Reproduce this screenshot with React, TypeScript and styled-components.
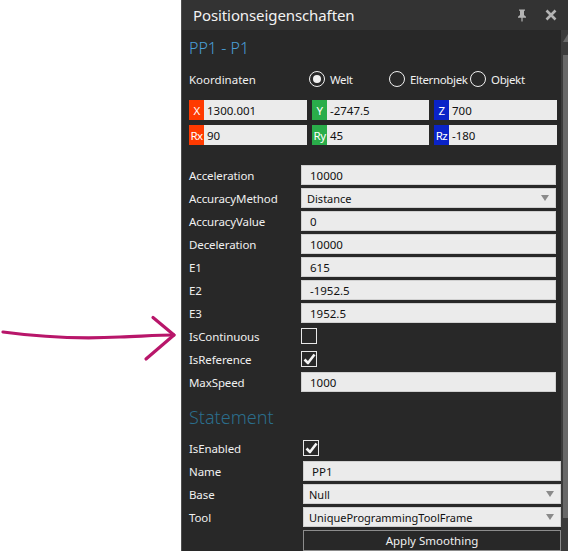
import React from "react";
import styled, { createGlobalStyle } from "styled-components";

const Global = createGlobalStyle`
  html, body { margin: 0; padding: 0; background: #ffffff; }
  body { font-family: "Noto Sans", "Open Sans", sans-serif; }
  * { box-sizing: border-box; }
`;

const Page = styled.div`
  display: flex;
  width: 568px;
  height: 551px;
  overflow: hidden;
`;

const Margin = styled.div`
  width: 181px;
  flex: none;
  display: flex;
  flex-direction: column;
  padding-top: 312px;
`;

const Panel = styled.div`
  width: 387px;
  height: 551px;
  flex: none;
  display: flex;
  flex-direction: column;
  background: #282828;
  border-left: 1px solid #4e4e4e;
`;

const TitleBar = styled.div`
  height: 30px;
  flex: none;
  display: flex;
  align-items: center;
  background: #333333;
  padding: 0 10px 0 11px;
  color: #f2f2f2;
  font-size: 15px;
`;

const Title = styled.div`
  flex: 1;
  letter-spacing: -0.1px;
`;

const TitleIcon = styled.div<{ $gap?: number }>`
  width: 14px;
  display: flex;
  align-items: center;
  justify-content: center;
  margin-left: ${(p) => p.$gap ?? 0}px;
`;

const Body = styled.div`
  flex: 1;
  display: flex;
  min-height: 0;
`;

const Content = styled.div`
  flex: 1;
  display: flex;
  flex-direction: column;
  padding: 6px 0 0 7px;
  overflow: hidden;
`;

const ScrollBar = styled.div`
  width: 7px;
  flex: none;
  display: flex;
  flex-direction: column;
  background: #3b3b3b;
  padding-left: 2px;
`;

const ScrollArrow = styled.div`
  height: 25px;
  display: flex;
  align-items: flex-start;
  padding-top: 4px;
`;

const ScrollThumb = styled.div`
  height: 463px;
  background: #686868;
`;

const Heading = styled.div<{ $color: string; $size: number; $top?: number }>`
  color: ${(p) => p.$color};
  font-size: ${(p) => p.$size}px;
  font-weight: 300;
  line-height: 24px;
  height: 24px;
  margin-top: ${(p) => p.$top ?? 0}px;
`;

const CoordHeader = styled.div`
  display: flex;
  align-items: center;
  height: 20px;
  margin-top: 9px;
  color: #f0f0f0;
  font-size: 11.5px;
`;

const CoordLabel = styled.div`
  width: 120px;
`;

const Radio = styled.div<{ $w: number }>`
  display: flex;
  align-items: center;
  width: ${(p) => p.$w}px;
  gap: 5px;
  letter-spacing: -0.35px;
`;

const RadioCircle = styled.div<{ $on?: boolean }>`
  width: 16px;
  height: 16px;
  flex: none;
  border-radius: 50%;
  border: 1.5px solid #f0f0f0;
  display: flex;
  align-items: center;
  justify-content: center;
  &::after {
    content: "";
    width: 8px;
    height: 8px;
    border-radius: 50%;
    background: ${(p) => (p.$on ? "#f0f0f0" : "transparent")};
  }
`;

const CoordGrid = styled.div`
  display: grid;
  grid-template-columns: 118px 117px 123px;
  column-gap: 5px;
  row-gap: 5px;
  margin-top: 11px;
`;

const CoordField = styled.div`
  height: 20px;
  display: flex;
  align-items: center;
  background: #ebebeb;
  font-size: 11.5px;
  color: #111;
`;

const AxisTag = styled.div<{ $bg: string }>`
  width: 15px;
  height: 100%;
  background: ${(p) => p.$bg};
  color: #fff;
  font-size: 11.5px;
  display: flex;
  align-items: center;
  justify-content: center;
  margin-right: 3px;
  letter-spacing: -0.6px;
`;

const PropList = styled.div<{ $top: number }>`
  display: flex;
  flex-direction: column;
  gap: 3px;
  margin-top: ${(p) => p.$top}px;
`;

const Row = styled.div<{ $col: number }>`
  display: grid;
  grid-template-columns: ${(p) => p.$col}px 1fr;
  height: 20px;
  align-items: center;
`;

const Label = styled.div`
  color: #f0f0f0;
  font-size: 11.5px;
  letter-spacing: -0.1px;
`;

const Input = styled.div<{ $right: number; $pad?: number }>`
  height: 20px;
  margin-right: ${(p) => p.$right}px;
  background: #ebebeb;
  border: 1px solid #d0d0d0;
  display: flex;
  align-items: center;
  padding-left: ${(p) => p.$pad ?? 8}px;
  padding-right: 6px;
  color: #111;
  font-size: 11.5px;
`;

const SelectText = styled.div`
  flex: 1;
  font-size: 11px;
`;

const Caret = styled.div`
  width: 0;
  height: 0;
  border-left: 4.5px solid transparent;
  border-right: 4.5px solid transparent;
  border-top: 6px solid #8a8a8a;
`;

const CheckBox = styled.div`
  width: 16px;
  height: 16px;
  border: 1.5px solid #e8e8e8;
  display: flex;
  align-items: center;
  justify-content: center;
`;

const Button = styled.div<{ $right: number }>`
  height: 21px;
  margin-right: ${(p) => p.$right}px;
  border: 1px solid #8c8c8c;
  color: #f0f0f0;
  font-size: 11.5px;
  display: flex;
  align-items: center;
  justify-content: center;
`;

const Check = () => (
  <svg width="13" height="12" viewBox="0 0 13 12">
    <path d="M1.5 6.5 L5 10 L11.5 1.5" fill="none" stroke="#f4f4f4" strokeWidth="2.6" strokeLinejoin="round" />
  </svg>
);

type Prop = { label: string; value?: string; kind: "text" | "select" | "check" | "empty" };

const motion: Prop[] = [
  { label: "Acceleration", value: "10000", kind: "text" },
  { label: "AccuracyMethod", value: "Distance", kind: "select" },
  { label: "AccuracyValue", value: "0", kind: "text" },
  { label: "Deceleration", value: "10000", kind: "text" },
  { label: "E1", value: "615", kind: "text" },
  { label: "E2", value: "-1952.5", kind: "text" },
  { label: "E3", value: "1952.5", kind: "text" },
  { label: "IsContinuous", kind: "empty" },
  { label: "IsReference", kind: "check" },
  { label: "MaxSpeed", value: "1000", kind: "text" },
];

const statement: Prop[] = [
  { label: "IsEnabled", kind: "check" },
  { label: "Name", value: "PP1", kind: "text" },
  { label: "Base", value: "Null", kind: "select" },
  { label: "Tool", value: "UniqueProgrammingToolFrame", kind: "select" },
];

const PropRow = ({ p, col, right }: { p: Prop; col: number; right: number }) => (
  <Row $col={col}>
    <Label>{p.label}</Label>
    {p.kind === "text" && <Input $right={right}>{p.value}</Input>}
    {p.kind === "select" && (
      <Input $right={right} $pad={5}>
        <SelectText>{p.value}</SelectText>
        <Caret />
      </Input>
    )}
    {p.kind === "empty" && <CheckBox />}
    {p.kind === "check" && (
      <CheckBox>
        <Check />
      </CheckBox>
    )}
  </Row>
);

const coords = [
  { tag: "X", bg: "#ff3a00", v: "1300.001" },
  { tag: "Y", bg: "#2aad4a", v: "-2747.5" },
  { tag: "Z", bg: "#0a23c8", v: "700" },
  { tag: "Rx", bg: "#ff3a00", v: "90" },
  { tag: "Ry", bg: "#2aad4a", v: "45" },
  { tag: "Rz", bg: "#0a23c8", v: "-180" },
];

export default function App() {
  return (
    <>
      <Global />
      <Page>
        <Margin>
          <svg width="181" height="60" viewBox="0 312 181 60">
            <path
              d="M3 332 C 40 337, 80 339, 120 337 C 145 336, 160 335, 174 335"
              fill="none"
              stroke="#b8166a"
              strokeWidth="3.2"
              strokeLinecap="round"
            />
            <path
              d="M153 317.5 L174 335 L146 359"
              fill="none"
              stroke="#b8166a"
              strokeWidth="3.2"
              strokeLinecap="round"
              strokeLinejoin="round"
            />
          </svg>
        </Margin>
        <Panel>
          <TitleBar>
            <Title>Positionseigenschaften</Title>
            <TitleIcon>
              <svg width="10" height="13" viewBox="0 0 10 13">
                <path d="M2 0.5 H8 V1.8 H7 V6 L9 7.8 V8.8 H5.6 V12.5 H4.4 V8.8 H1 V7.8 L3 6 V1.8 H2 Z" fill="#b4b4b4" />
              </svg>
            </TitleIcon>
            <TitleIcon $gap={15}>
              <svg width="12" height="12" viewBox="0 0 12 12">
                <path d="M1.5 1.5 L10.5 10.5 M10.5 1.5 L1.5 10.5" stroke="#b4b4b4" strokeWidth="2.6" />
              </svg>
            </TitleIcon>
          </TitleBar>
          <Body>
            <Content>
              <Heading $color="#4a9ed6" $size={16}>PP1 - P1</Heading>
              <CoordHeader>
                <CoordLabel>Koordinaten</CoordLabel>
                <Radio $w={80}>
                  <RadioCircle $on />
                  <span>Welt</span>
                </Radio>
                <Radio $w={81}>
                  <RadioCircle />
                  <span>Elternobjek</span>
                </Radio>
                <Radio $w={80}>
                  <RadioCircle />
                  <span>Objekt</span>
                </Radio>
              </CoordHeader>
              <CoordGrid>
                {coords.map((c) => (
                  <CoordField key={c.tag}>
                    <AxisTag $bg={c.bg}>{c.tag}</AxisTag>
                    {c.v}
                  </CoordField>
                ))}
              </CoordGrid>
              <PropList $top={20}>
                {motion.map((p) => (
                  <PropRow key={p.label} p={p} col={112} right={5} />
                ))}
              </PropList>
              <Heading $color="#2b6e8c" $size={18} $top={13}>
                Statement
              </Heading>
              <PropList $top={9}>
                {statement.map((p) => (
                  <PropRow key={p.label} p={p} col={114} right={0} />
                ))}
                <Row $col={114}>
                  <span />
                  <Button $right={0}>Apply Smoothing</Button>
                </Row>
              </PropList>
            </Content>
            <ScrollBar>
              <ScrollArrow>
                <svg width="5" height="8" viewBox="0 0 5 8">
                  <path d="M5 0 L5 8 L0 8 Z" fill="#6a6a6a" />
                </svg>
              </ScrollArrow>
              <ScrollThumb />
            </ScrollBar>
          </Body>
        </Panel>
      </Page>
    </>
  );
}
